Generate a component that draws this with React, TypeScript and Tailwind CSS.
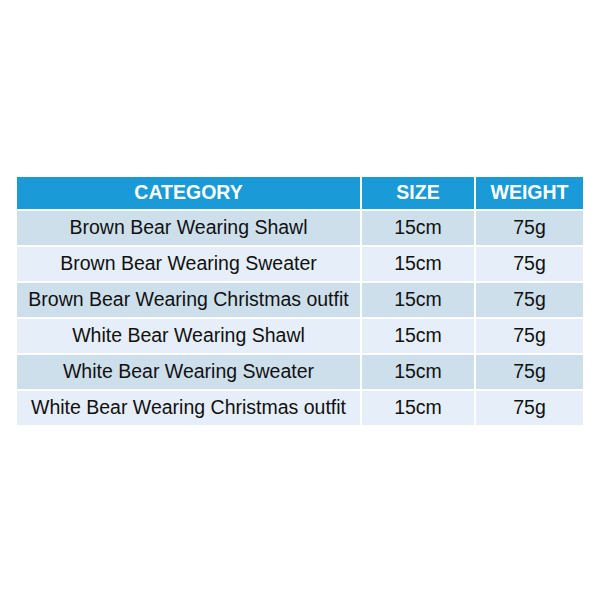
const rows = [
  'Brown Bear Wearing Shawl',
  'Brown Bear Wearing Sweater',
  'Brown Bear Wearing Christmas outfit',
  'White Bear Wearing Shawl',
  'White Bear Wearing Sweater',
  'White Bear Wearing Christmas outfit',
];

export default function App() {
  return (
    <div className="w-[600px] h-[600px] bg-white pt-[177px] pl-[17px] font-['Liberation_Sans',Arial,sans-serif]">
      <div className="grid grid-cols-[343px_112px_107px] gap-[2px]">
        {/* header */}
        <div className="h-[32px] bg-[#1a9ad6] flex items-center justify-center text-white font-bold text-[19.5px]">
          CATEGORY
        </div>
        <div className="h-[32px] bg-[#1a9ad6] flex items-center justify-center text-white font-bold text-[19.5px]">
          SIZE
        </div>
        <div className="h-[32px] bg-[#1a9ad6] flex items-center justify-center text-white font-bold text-[19.5px]">
          WEIGHT
        </div>

        {rows.map((name, i) => {
          const bg = i % 2 === 0 ? 'bg-[#cedfec]' : 'bg-[#e6eef9]';
          return [
            <div key={name + 'a'} className={`h-[34px] ${bg} flex items-center justify-center text-[#111] text-[19.5px]`}>
              {name}
            </div>,
            <div key={name + 'b'} className={`h-[34px] ${bg} flex items-center justify-center text-[#111] text-[19.5px]`}>
              15cm
            </div>,
            <div key={name + 'c'} className={`h-[34px] ${bg} flex items-center justify-center text-[#111] text-[19.5px]`}>
              75g
            </div>,
          ];
        })}
      </div>
    </div>
  );
}
